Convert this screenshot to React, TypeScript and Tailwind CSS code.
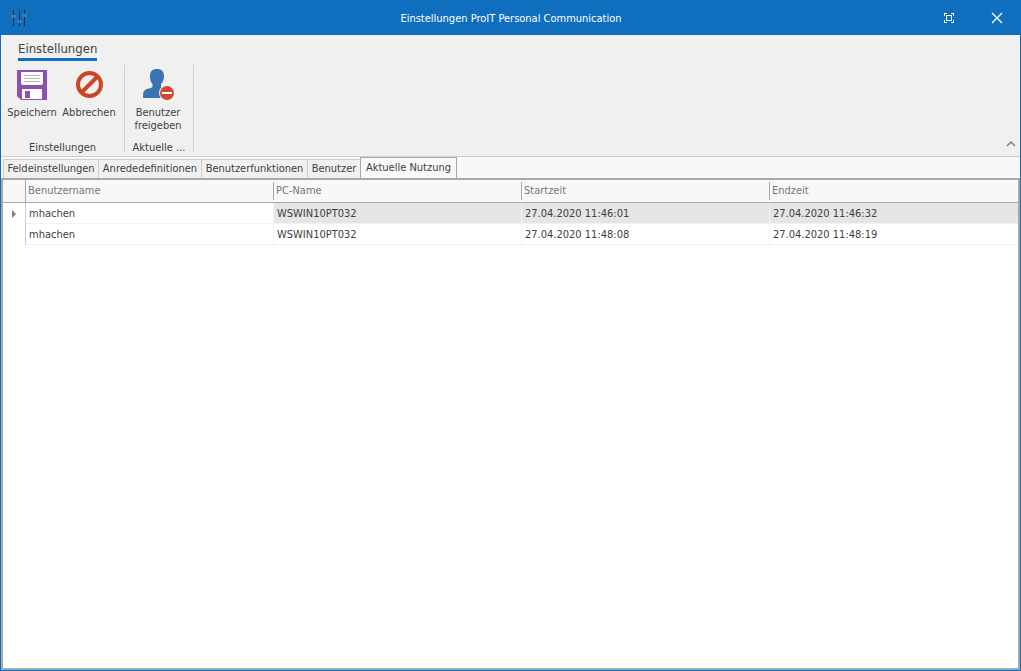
import React, { useState } from 'react';
import clsx from 'clsx';

interface UsageEntry {
  id: number;
  user: string;
  pc: string;
  start: string;
  end: string;
}

const tabs = [
  { label: 'Feldeinstellungen', width: 'w-[95px]' },
  { label: 'Anrededefinitionen', width: 'w-[103px]' },
  { label: 'Benutzerfunktionen', width: 'w-[106px]' },
  { label: 'Benutzer', width: 'w-[53px]' },
  { label: 'Aktuelle Nutzung', width: 'w-[97px]' },
];

const columns = ['Benutzername', 'PC-Name', 'Startzeit', 'Endzeit'];

const entries: UsageEntry[] = [
  { id: 1, user: 'mhachen', pc: 'WSWIN10PT032', start: '27.04.2020 11:46:01', end: '27.04.2020 11:46:32' },
  { id: 2, user: 'mhachen', pc: 'WSWIN10PT032', start: '27.04.2020 11:48:08', end: '27.04.2020 11:48:19' },
];

function SlidersIcon() {
  return (
    <svg width="18" height="18" viewBox="0 0 18 18" shapeRendering="crispEdges">
      <path d="M4 1h1v16H4zM10 1h1v16h-1zM15 1h1v16h-1z" fill="#2b2b2b" />
      <path d="M2 6h5v3H2zM8 11h5v3H8zM13 5h5v3h-5z" fill="#3d7abb" />
    </svg>
  );
}

function SaveIcon() {
  return (
    <svg width="32" height="32" viewBox="0 0 32 32">
      <path d="M1 1h30v30H5l-4-4z" fill="#8e52ad" />
      <path d="M5 3h22v11q0 2-2 2H7q-2 0-2-2z" fill="#fff" />
      <path d="M8 6h16v1H8zM8 9h16v1H8zM8 12h16v1H8z" fill="#b8b8b8" />
      <path d="M6 20h20v10H6z" fill="#fff" />
      <path d="M9 22h5v7H9z" fill="#8e52ad" />
    </svg>
  );
}

function CancelIcon() {
  return (
    <svg width="32" height="32" viewBox="0 0 32 32" fill="none" stroke="#cd4529" strokeWidth="4">
      <circle cx="16.500" cy="15.500" r="11.500" />
      <path d="M8.500 23.500l16-16" />
    </svg>
  );
}

function ReleaseUserIcon() {
  return (
    <svg width="32" height="32" viewBox="0 0 32 32">
      <path
        d="M15 0c4.600 0 7 2.500 7 7 0 4-1.500 6.500-3 8v3c1 1.500 7 2 8.500 5.500.5 1.500.5 3 .5 5.500H1c0-4 0-6.500 2-8 2-1.500 6-1.500 7.500-3v-3C9 13.500 8 11 8 7c0-4.500 2.400-7 7-7z"
        fill="#3974b2"
      />
      <circle cx="25" cy="24" r="8" fill="#f0f0f0" />
      <circle cx="25" cy="24" r="7" fill="#cf4a32" />
      <path d="M20 23h10v2H20z" fill="#fff" />
    </svg>
  );
}

function FullscreenIcon() {
  return (
    <svg width="12" height="12" viewBox="0 0 12 12" fill="#fff" shapeRendering="crispEdges">
      <path d="M1 1h3v1H2v2H1zM8 1h3v3h-1V2H8zM10 8h1v3H8v-1h2zM1 8h1v2h2v1H1z" />
      <path d="M3 3h6v6H3zM4 4v4h4V4z" fillRule="evenodd" />
    </svg>
  );
}

function CloseIcon() {
  return (
    <svg width="12" height="12" viewBox="0 0 12 12" fill="none" stroke="#fff" strokeWidth="1.300">
      <path d="M1 1l10 10M11 1L1 11" />
    </svg>
  );
}

interface RibbonButtonProps {
  icon: React.ReactNode;
  label: string;
  className: string;
}

function RibbonButton({ icon, label, className }: Readonly<RibbonButtonProps>) {
  return (
    <button type="button" className={clsx('flex flex-col items-center', className)}>
      {icon}
      <span className="mt-[5px] text-center leading-[13px]">{label}</span>
    </button>
  );
}

export default function App() {
  const [activeTab, setActiveTab] = useState('Aktuelle Nutzung');
  const [selectedId, setSelectedId] = useState(1);

  return (
    <div className="flex min-h-screen flex-col border border-t-0 border-[#106ebe] bg-[#f0f0f0] font-['DejaVu_Sans_Condensed','DejaVu_Sans',sans-serif] text-[11px] text-[#404040]">
      <header className="flex h-[35px] items-center bg-[#106ebe] text-white">
        <div className="w-[100px] pl-2">
          <SlidersIcon />
        </div>
        <h1 className="flex-1 pt-[2px] text-center leading-4">Einstellungen ProIT Personal Communication</h1>
        <div className="-mr-px flex w-[100px] items-center justify-end">
          <button type="button" aria-label="Vollbild" className="flex h-8 w-12 items-center justify-center">
            <FullscreenIcon />
          </button>
          <button type="button" aria-label="Schließen" className="flex h-8 w-12 items-center justify-center">
            <CloseIcon />
          </button>
        </div>
      </header>

      <nav className="flex h-[26px] items-end px-[17px]">
        <button type="button" className="border-b-[3px] border-[#106ebe] text-[13px] leading-[18px]">
          Einstellungen
        </button>
      </nav>

      {/* Ribbon */}
      <section className="flex items-end border-b border-[#cdcdcd] pt-1 pb-1">
        <div className="flex h-[87px] w-[124px] flex-col border-r border-[#d0d0d0] pt-1">
          <div className="flex h-[74px] items-start pl-[3px]">
            <RibbonButton icon={<SaveIcon />} label="Speichern" className="w-14" />
            <RibbonButton icon={<CancelIcon />} label="Abbrechen" className="w-[58px]" />
          </div>
          <div className="text-center leading-[9px]">Einstellungen</div>
        </div>
        <div className="flex h-[87px] w-[69px] flex-col border-r border-[#d0d0d0] pt-1">
          <div className="flex h-[74px] items-start pl-[5px]">
            <RibbonButton icon={<ReleaseUserIcon />} label="Benutzer freigeben" className="w-14" />
          </div>
          <div className="text-center leading-[9px]">Aktuelle ...</div>
        </div>
        <button type="button" aria-label="Menüband einklappen" className="ml-auto p-1">
          <svg width="10" height="8" viewBox="0 0 10 8" fill="none" stroke="#808080" strokeWidth="1.500">
            <path d="M1 6l4-4 4 4" />
          </svg>
        </button>
      </section>

      <div role="tablist" className="flex h-[21px] items-end bg-[#f8f8f8] pl-[2px]">
        {tabs.map((tab) => (
          <button
            key={tab.label}
            type="button"
            role="tab"
            aria-selected={tab.label === activeTab}
            onClick={() => setActiveTab(tab.label)}
            className={clsx(
              'whitespace-nowrap text-center leading-[18px]',
              tab.width,
              tab.label === activeTab
                ? 'h-[21px] border border-b-0 border-[#a8a8a8] bg-[#f8f8f8]'
                : 'h-[19px] border-t border-l border-[#cdcdcd] bg-[#f0f0f0]'
            )}
          >
            {tab.label}
          </button>
        ))}
      </div>

      <main className="flex-1 border-2 border-[#a8a8a8] bg-white">
        <table className="w-full table-fixed border-separate border-spacing-0">
          <colgroup>
            <col className="w-[23px]" />
            <col />
            <col />
            <col />
            <col />
          </colgroup>
          <thead>
            <tr className="h-[23px] bg-[#f8f8f8] text-left text-[#767676]">
              <th className="border-r border-b border-[#a8a8a8] p-0" aria-label="Auswahl" />
              {columns.map((column, index) => (
                <th key={column} className="border-b border-[#a8a8a8] p-0 font-normal">
                  <div
                    className={clsx(
                      'h-[18px] pl-[2px] leading-[18px]',
                      index < columns.length - 1 && 'border-r border-[#a8a8a8]'
                    )}
                  >
                    {column}
                  </div>
                </th>
              ))}
            </tr>
          </thead>
          <tbody>
            {entries.map((entry) => {
              const selected = entry.id === selectedId;
              return (
                <tr key={entry.id} className="h-[21px]" onClick={() => setSelectedId(entry.id)}>
                  <td className="border-r border-[#cdcdcd] p-0">
                    {selected && (
                      <svg className="ml-[9px]" width="5" height="8" viewBox="0 0 5 8">
                        <path d="M0 0l4 4-4 4z" fill="#808080" />
                      </svg>
                    )}
                  </td>
                  {[entry.user, entry.pc, entry.start, entry.end].map((value, index) => (
                    <td
                      key={value}
                      className={clsx(
                        'border-b border-[#f2f2f2] p-0 pt-px pl-[3px] leading-[18px]',
                        index < columns.length - 1 && 'border-r',
                        selected && index > 0 && 'bg-[#e5e5e5]'
                      )}
                    >
                      {value}
                    </td>
                  ))}
                </tr>
              );
            })}
          </tbody>
        </table>
      </main>
    </div>
  );
}
